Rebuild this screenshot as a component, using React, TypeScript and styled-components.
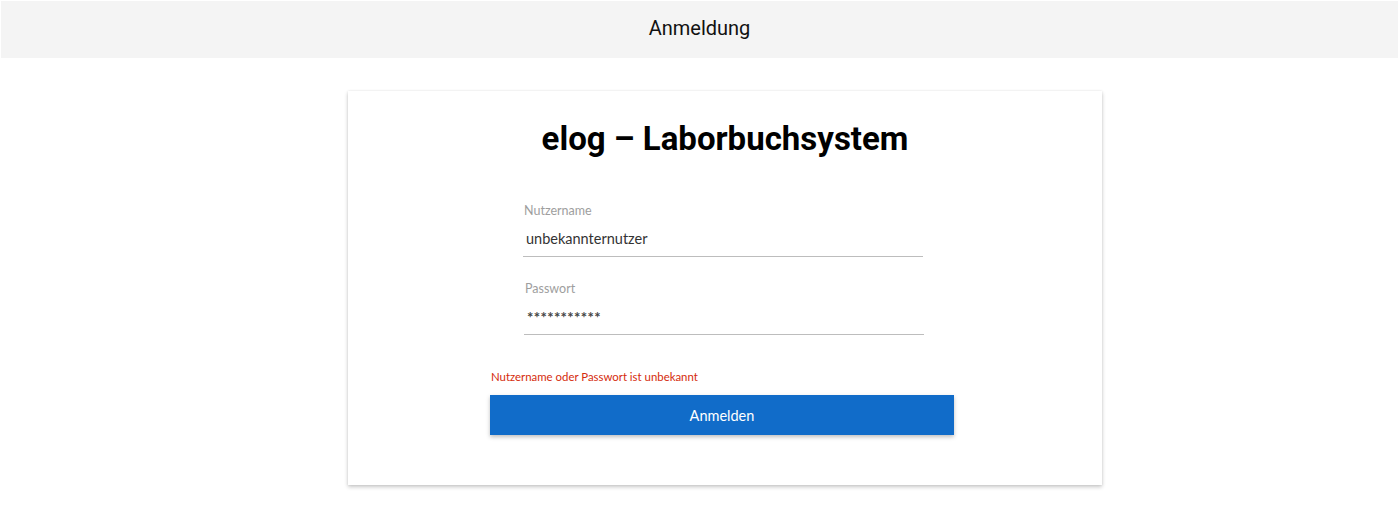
import React from "react";
import styled, { createGlobalStyle } from "styled-components";

const Global = createGlobalStyle`
  html, body { margin: 0; padding: 0; background: #ffffff; }
  body { font-family: Lato, sans-serif; }
  * { box-sizing: border-box; }
`;

const Page = styled.div`
  padding: 1px 2px 40px 1px;
  display: flex;
  flex-direction: column;
  align-items: stretch;
`;

const Header = styled.header`
  height: 57px;
  padding-bottom: 3px;
  background: #f4f4f4;
  display: flex;
  align-items: center;
  justify-content: center;
  font-family: Roboto, sans-serif;
  font-size: 20px;
  color: #111;
`;

const Main = styled.main`
  display: flex;
  justify-content: center;
  padding-top: 33px;
  padding-left: 51px;
`;

const Card = styled.section`
  width: 754px;
  height: 394px;
  background: #fff;
  box-shadow: 0 2px 4px rgba(0, 0, 0, 0.22), 0 0 2px rgba(0, 0, 0, 0.08);
  display: flex;
  flex-direction: column;
  align-items: center;
  padding-top: 28px;
`;

const Title = styled.h1`
  margin: 0;
  font-family: Roboto, sans-serif;
  font-weight: 700;
  font-size: 33px;
  line-height: 40px;
  color: #000;
`;

const Form = styled.form`
  margin-top: 44px;
  width: 464px;
  display: flex;
  flex-direction: column;
  margin-right: 6px;
`;

const Field = styled.label<{ $shift?: number }>`
  display: flex;
  flex-direction: column;
  width: 400px;
  margin-left: ${(p) => 33 + (p.$shift ?? 0)}px;
  margin-bottom: 24px;
`;

const LabelText = styled.span`
  font-size: 12.5px;
  line-height: 14px;
  margin-top: 1px;
  margin-bottom: -1px;
  color: #9e9e9e;
  padding-left: 1px;
`;

const Input = styled.input`
  border: none;
  border-bottom: 1px solid #bdbdbd;
  outline: none;
  background: transparent;
  font-family: Lato, sans-serif;
  font-size: 14.5px;
  color: #333;
  height: 40px;
  padding: 3px 3px 0;
`;

const PasswordInput = styled(Input)`
  font-size: 15px;
  font-weight: 700;
  color: #444;
  letter-spacing: 0.35px;
  padding-top: 5px;
`;

const ErrorText = styled.div`
  margin-top: 11px;
  font-size: 11.4px;
  line-height: 14px;
  color: #d52b0c;
  padding-left: 1px;
`;

const Button = styled.button`
  margin-top: 11px;
  height: 40px;
  width: 464px;
  border: none;
  background: #116cc9;
  color: #fff;
  font-family: Lato, sans-serif;
  font-size: 14.5px;
  box-shadow: 0 2px 4px rgba(0, 0, 0, 0.25);
  cursor: pointer;
`;

export default function App() {
  return (
    <>
      <Global />
      <Page>
        <Header>Anmeldung</Header>
        <Main>
          <Card>
            <Title>elog – Laborbuchsystem</Title>
            <Form onSubmit={(e) => e.preventDefault()}>
              <Field>
                <LabelText>Nutzername</LabelText>
                <Input type="text" defaultValue="unbekannternutzer" />
              </Field>
              <Field $shift={1}>
                <LabelText>Passwort</LabelText>
                <PasswordInput type="text" defaultValue="***********" />
              </Field>
              <ErrorText>Nutzername oder Passwort ist unbekannt</ErrorText>
              <Button type="submit">Anmelden</Button>
            </Form>
          </Card>
        </Main>
      </Page>
    </>
  );
}
